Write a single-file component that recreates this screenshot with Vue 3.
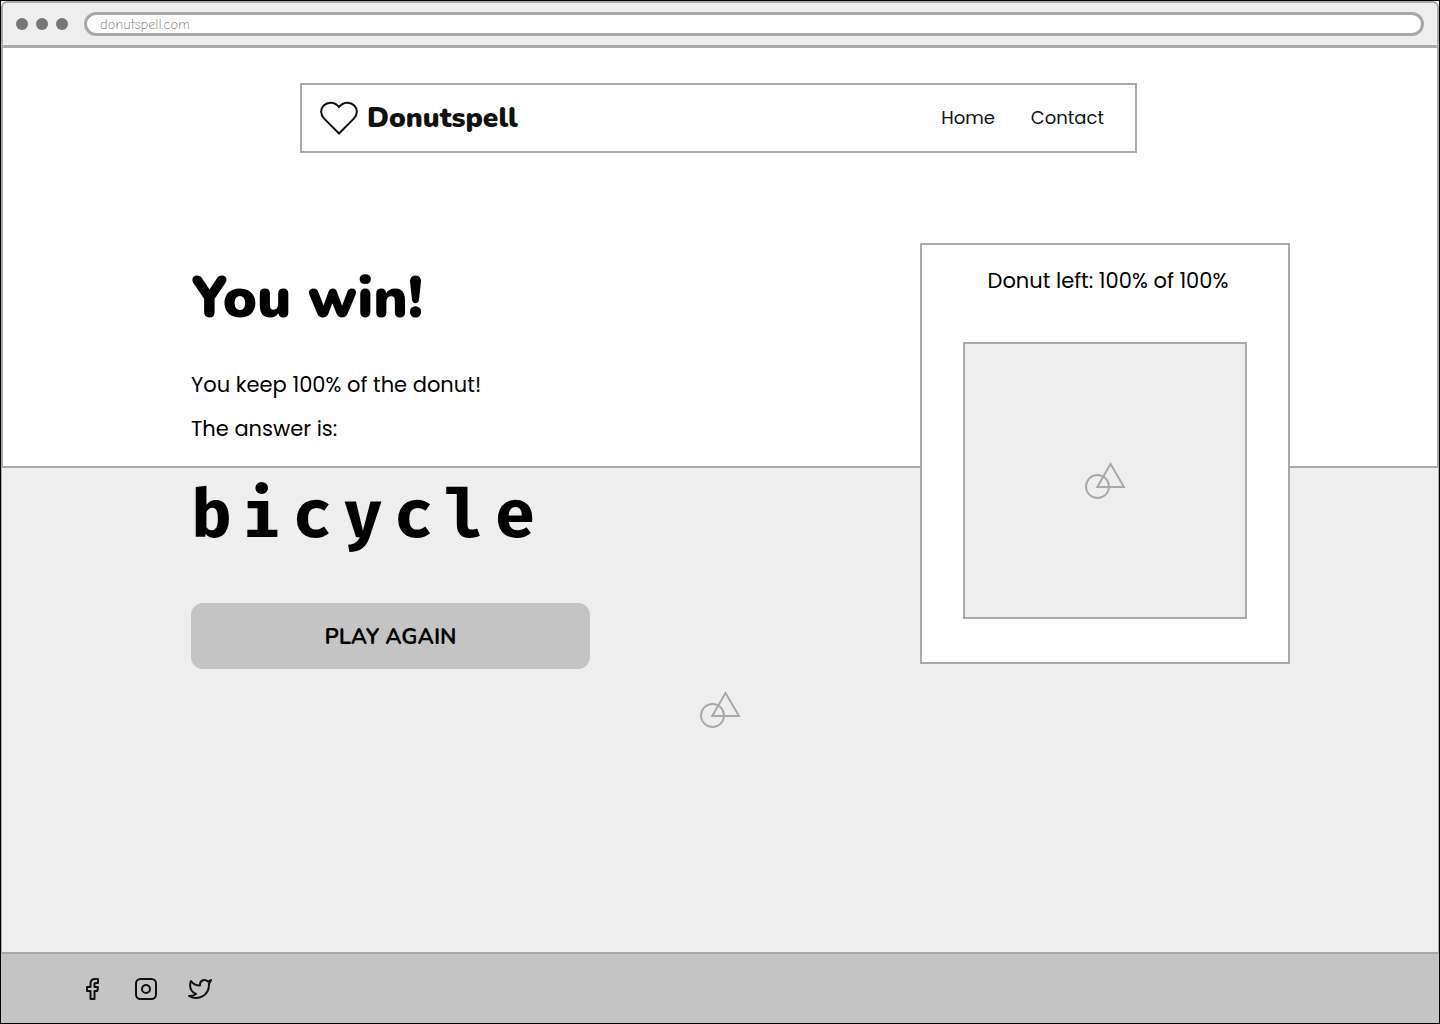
<script setup>
const url = 'donutspell.com'
const answer = 'bicycle'
const percent = 100
</script>

<template>
  <div class="window">
    <div class="chrome">
      <span class="dots"><i></i><i></i><i></i></span>
      <input class="address" type="text" :value="url" aria-label="Address" />
    </div>

    <div class="page">
      <div class="band band-top"></div>
      <div class="band band-bottom">
        <svg class="placeholder" viewBox="0 0 42 38" aria-hidden="true">
          <circle cx="13.500" cy="24.500" r="11.500" />
          <path d="M26.500 2L40 25H13.300Z" />
        </svg>
      </div>

      <div class="content">
        <header class="site-header">
          <a class="brand" href="#">
            <svg class="heart" viewBox="0 0 40 36" aria-hidden="true">
              <path d="M20 33.500L5.200 18.600C1.200 14.500 1.200 9 4.700 5.500C9 1.400 15.600 1.700 20 7C24.400 1.700 31 1.400 35.300 5.500C38.800 9 38.800 14.500 34.800 18.600Z" />
            </svg>
            <span>Donutspell</span>
          </a>
          <nav class="nav">
            <a href="#">Home</a>
            <a href="#">Contact</a>
          </nav>
        </header>

        <main class="result">
          <section class="summary">
            <h1>You win!</h1>
            <p>You keep {{ percent }}% of the donut!</p>
            <p>The answer is:</p>
            <strong class="answer">{{ answer }}</strong>
            <button class="play" type="button">PLAY AGAIN</button>
          </section>

          <section class="card">
            <p>Donut left: {{ percent }}% of 100%</p>
            <div class="picture">
              <svg class="placeholder" viewBox="0 0 42 38" aria-hidden="true">
                <circle cx="13.500" cy="24.500" r="11.500" />
                <path d="M26.500 2L40 25H13.300Z" />
              </svg>
            </div>
          </section>
        </main>
      </div>
    </div>

    <footer class="footer">
      <a href="#" aria-label="Facebook">
        <svg viewBox="0 0 24 24"><path d="M18 2H15C12.300 2 10.500 3.800 10.500 6.500V10H7V14H10.500V22H14.500V14H17.300L18 10H14.500V7C14.500 6.400 14.900 6 15.500 6H18Z" /></svg>
      </a>
      <a href="#" aria-label="Instagram">
        <svg viewBox="0 0 24 24"><rect x="2" y="2" width="20" height="20" rx="4.500" /><circle cx="12" cy="12" r="4" /></svg>
      </a>
      <a href="#" aria-label="Twitter">
        <svg viewBox="0 0 24 24"><path d="M23 3a10.900 10.900 0 0 1-3.140 1.530 4.480 4.480 0 0 0-7.860 3v1A10.660 10.660 0 0 1 3 4s-4 9 5 13a11.640 11.640 0 0 1-7 2c9 5 20 0 20-11.500a4.500 4.500 0 0 0-.08-.83A7.720 7.720 0 0 0 23 3z" /></svg>
      </a>
    </footer>
  </div>
</template>

<style>
body {
  margin: 0;
}
</style>

<style scoped>
* {
  box-sizing: border-box;
}

.window {
  display: flex;
  flex-direction: column;
  min-height: 100vh;
  border: 1px solid #000;
  background: #fff;
  color: #000;
  font-family: Poppins, Inter, sans-serif;
}

a {
  color: #111;
  text-decoration: none;
}

.chrome {
  display: flex;
  align-items: center;
  gap: 16px;
  height: 47px;
  padding: 0 13px;
  border: 2px solid #a9a9a9;
  border-bottom-width: 3px;
  border-radius: 6px 6px 0 0;
  background: #eee;
}

.dots {
  display: flex;
  gap: 8px;
}

.dots i {
  width: 12px;
  height: 12px;
  border-radius: 50%;
  background: #777;
}

.address {
  flex: 1;
  min-width: 0;
  height: 24px;
  padding: 0 13px;
  border: 3px solid #a9a9a9;
  border-radius: 12px;
  background: #fff;
  color: #777;
  font: 300 14px/18px "Comic Neue", Handlee, Lato, sans-serif;
  outline: none;
}

.page {
  flex: 1;
  display: grid;
  grid-template: 420px 1fr / 100%;
}

.band-top {
  grid-area: 1 / 1;
  border: 2px solid #a9a9a9;
  border-top: 0;
  background: #fff;
}

.band-bottom {
  grid-area: 2 / 1;
  display: flex;
  align-items: center;
  justify-content: center;
  border: 1px solid #a9a9a9;
  border-width: 0 1px;
  background: #eee;
}

.placeholder {
  width: 42px;
  height: 38px;
  fill: none;
  stroke: #a9a9a9;
  stroke-width: 2;
}

.content {
  grid-area: 1 / 1 / 3 / 2;
  z-index: 1;
  padding: 35px 149px 40px 190px;
}

.site-header {
  display: flex;
  align-items: center;
  justify-content: space-between;
  max-width: 837px;
  height: 70px;
  margin-left: 109px;
  padding: 0 31px 0 17px;
  border: 2px solid #a9a9a9;
  background: #fff;
}

.brand {
  display: flex;
  align-items: center;
  gap: 8px;
  font: 900 28px/40px Nunito, Lato, sans-serif;
}

.heart {
  width: 40px;
  height: 36px;
  fill: none;
  stroke: #111;
  stroke-width: 2;
}

.nav {
  display: flex;
  gap: 36px;
  padding-bottom: 2px;
  font-size: 18px;
}

.result {
  display: flex;
  flex-wrap: wrap;
  align-items: flex-start;
  justify-content: space-between;
  gap: 40px;
  margin-top: 90px;
}

.summary {
  display: flex;
  flex-direction: column;
  width: 399px;
  padding-top: 23px;
}

h1 {
  margin: 0 0 33px;
  font: 900 57px/64px Nunito, Lato, sans-serif;
}

p {
  margin: 0;
  font-size: 21px;
  line-height: 44px;
}

.answer {
  margin: 16px 0 36px;
  font: 700 66px/100px "Fira Code", "DejaVu Sans Mono", monospace;
  letter-spacing: 10px;
}

.play {
  height: 66px;
  padding: 2px 0 0;
  border: 0;
  border-radius: 12px;
  background: #c4c4c4;
  color: #000;
  font: 700 22px/32px Nunito, Lato, sans-serif;
}

.card {
  width: 370px;
  padding: 14px 41px 43px;
  border: 2px solid #a9a9a9;
  background: #fff;
  text-align: center;
}

.card p {
  padding-left: 6px;
}

.picture {
  display: flex;
  align-items: center;
  justify-content: center;
  height: 277px;
  margin-top: 39px;
  border: 2px solid #a9a9a9;
  background: #eee;
}

.footer {
  display: flex;
  align-items: center;
  gap: 30px;
  height: 71px;
  padding: 0 79px;
  border-top: 2px solid #a9a9a9;
  background: #c4c4c4;
}

.footer a,
.footer svg {
  display: block;
  width: 24px;
  height: 24px;
}

.footer svg {
  fill: none;
  stroke: #111;
  stroke-width: 2;
  stroke-linejoin: round;
}
</style>
